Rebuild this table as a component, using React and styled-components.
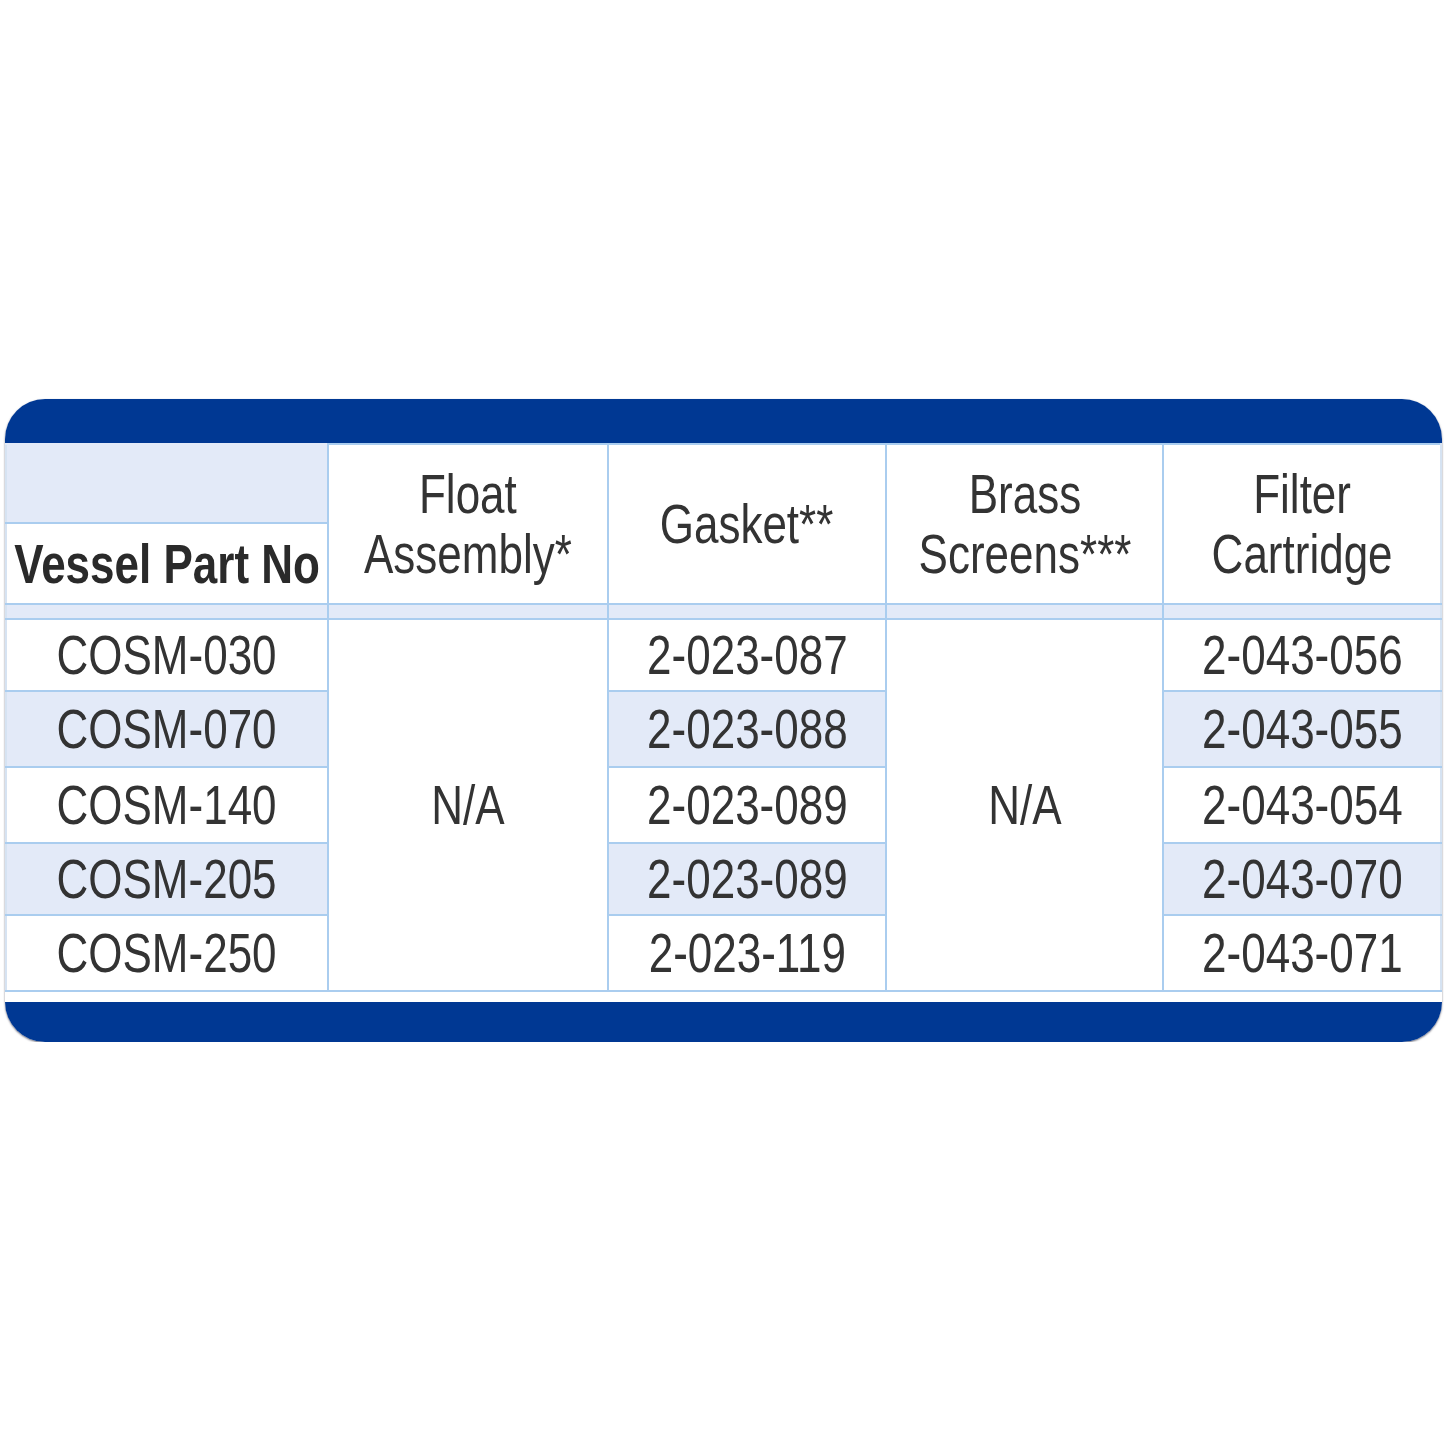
import React from "react";
import styled, { createGlobalStyle } from "styled-components";

const Global = createGlobalStyle`
  html, body { margin: 0; padding: 0; background: #ffffff; }
  body { font-family: "Liberation Sans", Arial, sans-serif; }
`;

const Page = styled.div`
  padding: 399px 3px 0 5px;
`;

const Card = styled.div`
  width: 1437px;
  background: #ffffff;
  border-radius: 40px;
  overflow: hidden;
  box-shadow: 0 1px 2px rgba(20, 20, 40, 0.6);
  display: flex;
  flex-direction: column;
`;

const Bar = styled.div`
  height: ${(p) => p.$h}px;
  background: #003893;
  flex: none;
`;

const Gap = styled.div`
  height: 10px;
  background: #ffffff;
`;

const Table = styled.table`
  width: 1435px;
  border-collapse: collapse;
  table-layout: fixed;
  font-family: "Liberation Sans", Arial, sans-serif;
`;

const Cell = styled.td`
  border: 2px solid #aacdef;
  background: ${(p) => (p.$shade ? "#e3eaf8" : "#ffffff")};
  vertical-align: middle;
  padding: 0;
  overflow: visible;
  &:first-child { border-left-color: #d6e3f2; }
  &:last-child { border-right-color: #d6e3f2; }
`;

const Center = styled.div`
  display: flex;
  justify-content: center;
  align-items: center;
`;

const Text = styled.span`
  display: block;
  flex: none;
  text-align: center;
  white-space: nowrap;
  font-size: 55px;
  line-height: 60px;
  font-weight: ${(p) => (p.$bold ? 700 : 400)};
  color: ${(p) => (p.$bold ? "#2a2a2a" : "#333333")};
  transform: scaleX(0.8);
  transform-origin: center;
`;

const Row = styled.tr`
  height: ${(p) => p.$h}px;
`;

const cols = [322, 280, 278, 277, 278];

const rows = [
  { part: "COSM-030", gasket: "2-023-087", filter: "2-043-056", h: 72 },
  { part: "COSM-070", gasket: "2-023-088", filter: "2-043-055", h: 76 },
  { part: "COSM-140", gasket: "2-023-089", filter: "2-043-054", h: 76 },
  { part: "COSM-205", gasket: "2-023-089", filter: "2-043-070", h: 72 },
  { part: "COSM-250", gasket: "2-023-119", filter: "2-043-071", h: 76 },
];

function T({ children, bold }) {
  return (
    <Center>
      <Text $bold={bold}>{children}</Text>
    </Center>
  );
}

export default function App() {
  return (
    <>
      <Global />
      <Page>
        <Card>
          <Bar $h={44} />
          <Table>
            <colgroup>
              {cols.map((w, i) => (
                <col key={i} style={{ width: w }} />
              ))}
            </colgroup>
            <tbody>
              <Row $h={79}>
                <Cell $shade style={{ borderTopColor: "#e3eaf8" }} />
                <Cell rowSpan={2}>
                  <T>
                    Float
                    <br />
                    Assembly*
                  </T>
                </Cell>
                <Cell rowSpan={2}>
                  <T>Gasket**</T>
                </Cell>
                <Cell rowSpan={2}>
                  <T>
                    Brass
                    <br />
                    Screens***
                  </T>
                </Cell>
                <Cell rowSpan={2}>
                  <T>
                    Filter
                    <br />
                    Cartridge
                  </T>
                </Cell>
              </Row>
              <Row $h={81}>
                <Cell>
                  <T bold>Vessel Part No</T>
                </Cell>
              </Row>
              <Row $h={15}>
                {cols.map((_, i) => (
                  <Cell key={i} $shade />
                ))}
              </Row>
              {rows.map((r, i) => {
                const shade = i % 2 === 1;
                return (
                  <Row key={r.part} $h={r.h}>
                    <Cell $shade={shade}>
                      <T>{r.part}</T>
                    </Cell>
                    {i === 0 && (
                      <Cell rowSpan={5}>
                        <T>N/A</T>
                      </Cell>
                    )}
                    <Cell $shade={shade}>
                      <T>{r.gasket}</T>
                    </Cell>
                    {i === 0 && (
                      <Cell rowSpan={5}>
                        <T>N/A</T>
                      </Cell>
                    )}
                    <Cell $shade={shade}>
                      <T>{r.filter}</T>
                    </Cell>
                  </Row>
                );
              })}
            </tbody>
          </Table>
          <Gap />
          <Bar $h={40} />
        </Card>
      </Page>
    </>
  );
}
